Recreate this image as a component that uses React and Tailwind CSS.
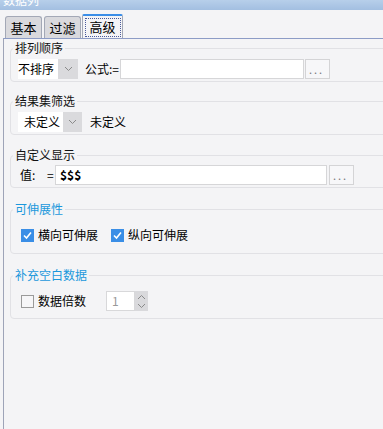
import React from 'react';

const font = { fontFamily: '"Noto Sans CJK SC", "Noto Sans", sans-serif' };

const Chevron = ({ dir = 'down' }) => (
  <svg width="9" height="6" viewBox="0 0 9 6" className={dir === 'up' ? 'rotate-180' : ''}>
    <path d="M1 1 L4.5 4.5 L8 1" fill="none" stroke="#8a8a8a" strokeWidth="1" />
  </svg>
);

const Check = ({ checked }) =>
  checked ? (
    <span className="flex h-[13px] w-[13px] items-center justify-center bg-[#3a8ee6]">
      <svg width="11" height="11" viewBox="0 0 11 11">
        <path d="M2 5.5 L4.5 8 L9 2.5" fill="none" stroke="#ffffff" strokeWidth="1.6" />
      </svg>
    </span>
  ) : (
    <span className="h-[13px] w-[13px] border border-[#9a9a9a] bg-[#f6f6f8]" />
  );

// group box, legend sits on the top border
const Group = ({ title, blue, className, inner, children }) => (
  <fieldset className={`ml-[6px] -mr-[20px] rounded-[4px] border border-[#e1e1e5] ${className}`}>
    <legend
      className={`ml-[2px] px-[2px] text-[12px] leading-[14px] ${blue ? 'text-[#1b98dc]' : 'text-[#111]'}`}
    >
      {title}
    </legend>
    <div className={inner}>{children}</div>
  </fieldset>
);

const Dots = () => (
  <div className="ml-[1px] flex h-[20px] w-[25px] items-center border border-[#d4d4d6] bg-[#f7f7f9] pl-[3px] text-[11px] leading-none tracking-[2px] text-[#777]">
    ...
  </div>
);

export default function App() {
  return (
    <div className="h-[429px] w-[383px] overflow-hidden bg-[#f4f4f6] text-[12px] text-black" style={font}>
      {/* title bar */}
      <div className="h-[10px] overflow-hidden bg-gradient-to-b from-[#b7cfea] to-[#a3bfe1] pl-[3px]">
        <div className="-mt-[7px] text-[12px] leading-[14px] text-white">数据列</div>
      </div>

      {/* tabs */}
      <div className="flex h-[28px] items-end pl-[5px]">
        <div className="flex h-[22px] w-[37px] items-center justify-center rounded-t-[3px] border border-b-0 border-[#a3a8b6] bg-[#d9d9dd] text-[13px]">
          基本
        </div>
        <div className="ml-[2px] flex h-[22px] w-[37px] items-center justify-center rounded-t-[3px] border border-b-0 border-[#a3a8b6] bg-[#d9d9dd] text-[13px]">
          过滤
        </div>
        <div className="ml-[1px] flex h-[24px] w-[41px] items-center justify-center rounded-t-[2px] border-x border-t-2 border-x-[#a3a8b6] border-t-[#3b8ee8] bg-[#f4f4f6]">
          <span className="flex h-[19px] w-[36px] items-center justify-center border border-dotted border-[#4a5a9a] text-[13px]">
            高级
          </span>
        </div>
      </div>

      {/* panel */}
      <div className="ml-[3px] h-full border-l border-t border-l-[#9ea4b8] border-t-[#8d9cc6]">
        <Group title="排列顺序" className="mt-[2px] pb-[2px] pt-[4px]" inner="pl-[7px]">
          <div className="flex h-[20px] items-center">
            <div className="flex h-[20px] w-[60px]">
              <div className="flex w-[40px] items-center bg-white">不排序</div>
              <div className="flex w-[20px] items-center justify-center bg-[#dadadd]">
                <Chevron />
              </div>
            </div>
            <span className="ml-[7px] w-[35px]">公式:=</span>
            <div className="h-[20px] w-[184px] border border-[#d6d6d8] bg-white" />
            <Dots />
          </div>
        </Group>

        <Group title="结果集筛选" className="mt-[12px] pb-[2px] pt-[4px]" inner="pl-[7px]">
          <div className="flex h-[20px] items-center">
            <div className="flex h-[20px] w-[64px]">
              <div className="flex w-[45px] items-center bg-white pl-[6px]">未定义</div>
              <div className="flex w-[19px] items-center justify-center bg-[#dadadd]">
                <Chevron />
              </div>
            </div>
            <span className="ml-[8px]">未定义</span>
          </div>
        </Group>

        <Group title="自定义显示" className="mt-[13px] pb-[2px] pt-[3px]" inner="pl-[9px]">
          <div className="flex h-[20px] items-center">
            <span className="w-[27px]">值:</span>
            <span className="w-[8px]">=</span>
            <div className="flex h-[20px] w-[272px] items-center border border-[#d6d6d8] bg-white pl-[4px] font-bold">
              $$$
            </div>
            <div className="ml-[1px]">
              <Dots />
            </div>
          </div>
        </Group>

        <Group title="可伸展性" blue className="mt-[14px] pb-[10px] pt-[11px]" inner="pl-[10px]">
          <div className="flex h-[16px] items-center">
            <Check checked />
            <span className="ml-[4px] w-[73px]">横向可伸展</span>
            <Check checked />
            <span className="ml-[4px]">纵向可伸展</span>
          </div>
        </Group>

        <Group title="补充空白数据" blue className="mt-[14px] pb-[7px] pt-[9px]" inner="pl-[10px]">
          <div className="flex h-[20px] items-center">
            <Check />
            <span className="ml-[4px] w-[68px]">数据倍数</span>
            <div className="flex h-[20px] w-[29px] items-center border border-[#d8d8da] bg-white pl-[5px] text-[#999]">
              1
            </div>
            <div className="flex h-[20px] w-[13px] flex-col items-center justify-center gap-[3px] bg-[#d9d9dc]">
              <Chevron dir="up" />
              <Chevron />
            </div>
          </div>
        </Group>
      </div>
    </div>
  );
}
